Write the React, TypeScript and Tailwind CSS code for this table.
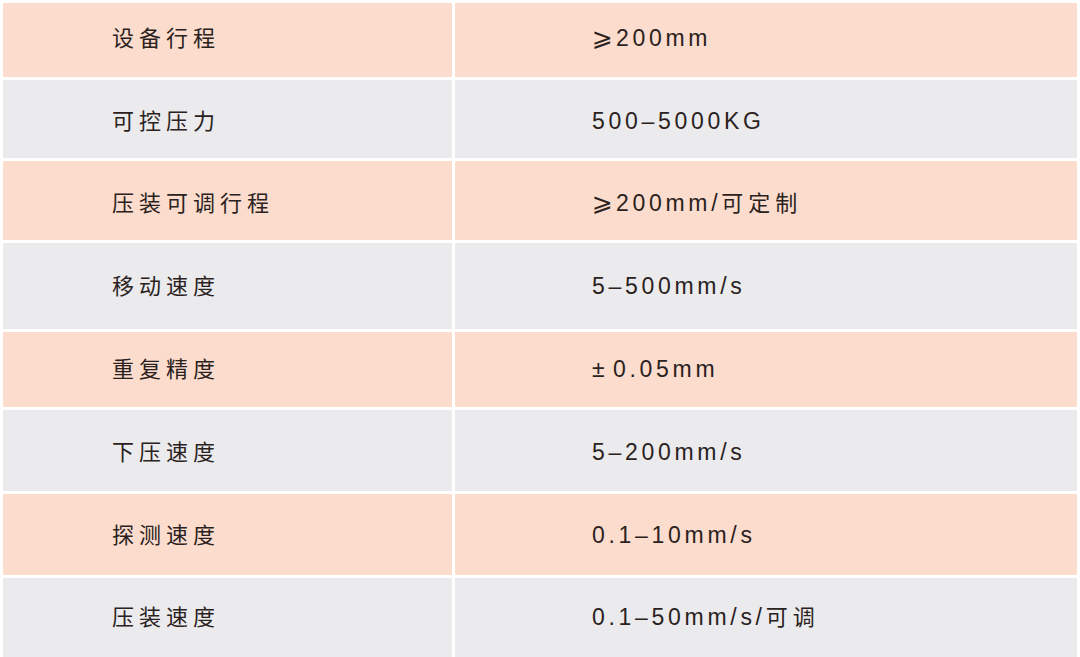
import React from "react";

const rows: { k: string; v: string; h: number; dy: number; peach: boolean }[] = [
  { k: "设备行程", v: "⩾200mm", h: 74, dy: -2, peach: true },
  { k: "可控压力", v: "500–5000KG", h: 78, dy: 2, peach: false },
  { k: "压装可调行程", v: "⩾200mm/可定制", h: 79, dy: 2.5, peach: true },
  { k: "移动速度", v: "5–500mm/s", h: 86, dy: 0, peach: false },
  { k: "重复精度", v: "±\u00a00.05mm", h: 75, dy: 0, peach: true },
  { k: "下压速度", v: "5–200mm/s", h: 81, dy: 1.5, peach: false },
  { k: "探测速度", v: "0.1–10mm/s", h: 81, dy: 0.5, peach: true },
  { k: "压装速度", v: "0.1–50mm/s/可调", h: 79, dy: -0.5, peach: false },
];

function Runs({ text }: { text: string }) {
  const parts = text.match(/[\u4e00-\u9fff]+|[^\u4e00-\u9fff]+/g) || [];
  return (
    <span className="whitespace-nowrap">
      {parts.map((p, i) =>
        /[\u4e00-\u9fff]/.test(p) ? (
          <span key={i} className="text-[22px] tracking-[5px]">
            {p}
          </span>
        ) : (
          <span key={i} className="text-[23px] tracking-[3.7px]">
            {p.split("").map((c, j) =>
              c === "⩾" ? (
                <span
                  key={j}
                  style={{ fontFamily: '"DejaVu Sans", sans-serif' }}
                  className="text-[25px] tracking-[3px]"
                >
                  {c}
                </span>
              ) : c === "±" ? (
                <span key={j} className="text-[23px] tracking-[2px]">
                  {c}
                </span>
              ) : c === "\u00a0" ? (
                <span key={j} className="tracking-[0px]">
                  {c}
                </span>
              ) : (
                c
              )
            )}
          </span>
        )
      )}
    </span>
  );
}

export default function App() {
  return (
    <div
      className="w-[1080px] h-[657px] bg-white pt-[3px] px-[3px] flex flex-col gap-[3px] text-[#2a2220]"
      style={{ fontFamily: '"Liberation Sans", "Noto Sans CJK SC", sans-serif' }}
    >
      {rows.map((r) => {
        const pad = {
          paddingTop: Math.max(0, r.dy * 2),
          paddingBottom: Math.max(0, -r.dy * 2),
        };
        const bg = r.peach ? "bg-[#fcdccd]" : "bg-[#ebeaed]";
        return (
          <div
            key={r.k}
            className="grid grid-cols-[449px_622px] gap-[3px]"
            style={{ height: r.h }}
          >
            <div className={`flex items-center pl-[109px] ${bg}`} style={pad}>
              <Runs text={r.k} />
            </div>
            <div className={`flex items-center pl-[137px] ${bg}`} style={pad}>
              <Runs text={r.v} />
            </div>
          </div>
        );
      })}
    </div>
  );
}
